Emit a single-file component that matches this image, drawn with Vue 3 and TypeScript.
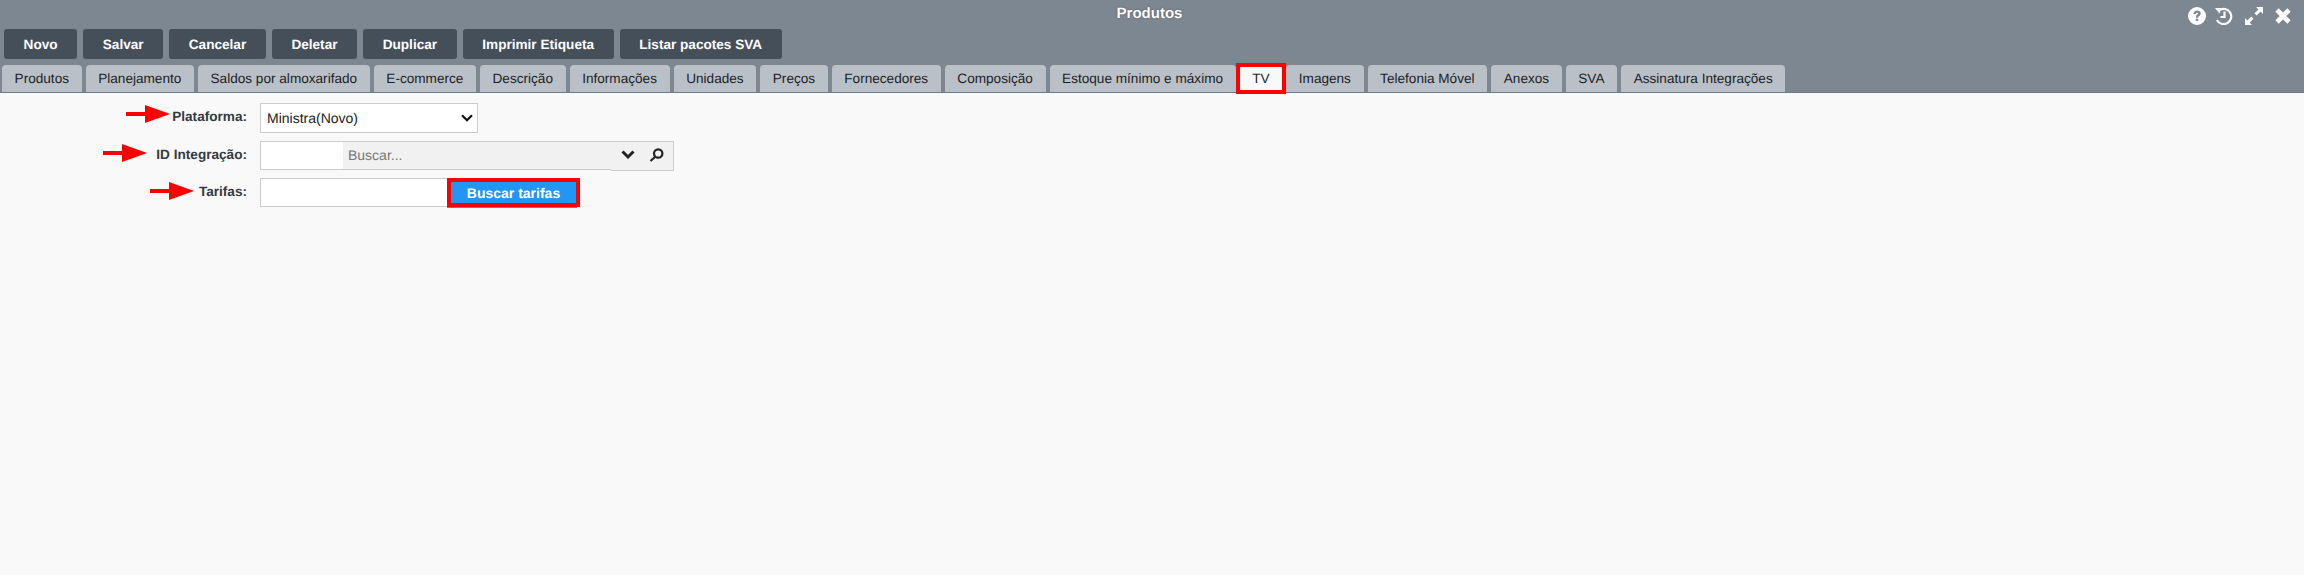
<script setup lang="ts">
const actions: string[] = ['Novo', 'Salvar', 'Cancelar', 'Deletar', 'Duplicar', 'Imprimir Etiqueta', 'Listar pacotes SVA']
const tabs: string[] = [
  'Produtos', 'Planejamento', 'Saldos por almoxarifado', 'E-commerce', 'Descrição', 'Informações', 'Unidades', 'Preços',
  'Fornecedores', 'Composição', 'Estoque mínimo e máximo', 'TV', 'Imagens', 'Telefonia Móvel', 'Anexos', 'SVA', 'Assinatura Integrações'
]
</script>

<template>
  <div class="page">
    <header class="head">
      <div class="title">
        <span>Produtos</span>
        <div class="win-icons">
          <svg width="18" height="18" viewBox="0 0 18 18">
            <path fill-rule="evenodd" fill="#fff" d="M9 0a9 9 0 1 1 0 18A9 9 0 0 1 9 0zM5.500 7H8c.1-.9.500-1.300 1.100-1.300.6 0 1 .4 1 .9 0 1.100-2.300 1.300-2.300 3.700v.5h2.400v-.4c0-1.500 2.500-1.700 2.500-4 0-1.800-1.500-3-3.500-3C6.900 3.400 5.600 4.800 5.500 7zm2.300 4.700V14h2.400v-2.300z" />
          </svg>
          <svg class="history" width="18" height="18" viewBox="0 0 18 18" fill="none" stroke="#fff" stroke-width="2.200">
            <path d="M0 1h6.200L4.500 6.500z" fill="#fff" stroke="none" />
            <path d="M4.200 3.300A7.600 7.600 0 1 1 1.900 13" />
            <path d="M9.500 4.500V10H5.500" />
          </svg>
          <svg width="18" height="18" viewBox="0 0 18 18" fill="#fff">
            <path d="M11 0h7v7l-2.400-2.400L11.700 8.500 9.500 6.300l3.900-3.900z" />
            <path d="M7 18H0v-7l2.400 2.400 3.900-3.900 2.200 2.200-3.900 3.900z" />
          </svg>
          <svg width="16" height="16" viewBox="0 0 16 16" stroke="#fff" stroke-width="4.600">
            <path d="M2 2l12 12M14 2L2 14" />
          </svg>
        </div>
      </div>
      <div class="actions">
        <button v-for="a in actions" :key="a" class="action">{{ a }}</button>
      </div>
      <nav class="tabs">
        <a v-for="t in tabs" :key="t" class="tab" :class="{ active: t === 'TV' }">{{ t }}</a>
      </nav>
    </header>

    <main class="form">
      <div class="row row-plat">
        <label>
          <svg class="arrow" width="44" height="18" viewBox="0 0 44 18"><path d="M0 7h19V0l25 9-25 9v-7H0z" fill="#f00" /></svg>
          Plataforma:
        </label>
        <div class="select">
          <span>Ministra(Novo)</span>
          <svg width="12" height="8" viewBox="0 0 12 8" fill="none" stroke="#111" stroke-width="2.200"><path d="M1 1.200l5 5 5-5" /></svg>
        </div>
      </div>
      <div class="row row-id">
        <label>
          <svg class="arrow" width="44" height="18" viewBox="0 0 44 18"><path d="M0 7h19V0l25 9-25 9v-7H0z" fill="#f00" /></svg>
          ID Integração:
        </label>
        <div class="lookup">
          <div class="field">
            <div class="code"></div>
            <div class="search">Buscar...</div>
          </div>
          <div class="btns">
            <svg width="14" height="10" viewBox="0 0 14 10" fill="none" stroke="#222" stroke-width="3"><path d="M1.500 1.500L7 7l5.500-5.500" /></svg>
            <svg width="15" height="14" viewBox="0 0 15 14" fill="none" stroke="#222" stroke-width="2.200"><circle cx="9.200" cy="5.500" r="4.200" /><path d="M6 9l-4.500 4" /></svg>
          </div>
        </div>
      </div>
      <div class="row row-tar">
        <label>
          <svg class="arrow" width="44" height="18" viewBox="0 0 44 18"><path d="M0 7h19V0l25 9-25 9v-7H0z" fill="#f00" /></svg>
          Tarifas:
        </label>
        <div class="tarifas">
          <div class="tar-input"></div>
          <button class="fetch">Buscar tarifas</button>
        </div>
      </div>
    </main>
  </div>
</template>

<style>
html, body { margin: 0; background: #f9f9f9; }
</style>

<style scoped>
.page {
  width: 2304px;
  height: 575px;
  overflow: hidden;
  background: #f9f9f9;
  font-family: "Liberation Sans", Arial, sans-serif;
  font-size: 13.6px;
  text-rendering: geometricPrecision;
}
.head {
  background: #7d8791;
  border-bottom: 1px solid #6f7984;
}
.title {
  position: relative;
  height: 29px;
  padding-right: 5px;
  line-height: 28px;
  text-align: center;
  color: #fff;
  font-weight: bold;
  font-size: 15px;
  text-shadow: 0 0 2px rgba(0, 0, 0, .4);
}
.win-icons {
  position: absolute;
  top: 7px;
  right: 13px;
  display: flex;
  align-items: center;
  gap: 12px;
}
.history {
  margin-left: -3px;
}
.actions {
  display: flex;
  gap: 6px;
  padding: 0 4px;
  height: 30px;
}
.action {
  height: 30px;
  padding: 0 19.6px;
  border: 0;
  border-radius: 3px;
  background: #454f5a;
  color: #fff;
  font: bold 13.6px "Liberation Sans", Arial, sans-serif;
  text-rendering: geometricPrecision;
}
.tabs {
  display: flex;
  gap: 4px;
  padding: 6px 0 0 2px;
  height: 27px;
}
.tab {
  position: relative;
  height: 27px;
  line-height: 27px;
  padding: 0 12.6px;
  border-radius: 4px 4px 0 0;
  background: #bac0c8;
  color: #1b1f24;
}
.tab.active {
  background: #f9f9f9;
}
/* marcação vermelha do print */
.tab.active::after {
  content: "";
  position: absolute;
  inset: -2px -4px -2px -4px;
  border: 4px solid #f00;
}
.form {
  padding-top: 10px;
}
.row {
  display: flex;
  margin-bottom: 8px;
}
label {
  position: relative;
  width: 247px;
  padding-right: 13px;
  text-align: right;
  font-weight: bold;
  color: #333a42;
  line-height: 27px;
}
.arrow {
  position: absolute;
}
.row-plat .arrow { left: 126px; top: 2px; }
.row-id .arrow { left: 103px; top: 3px; }
.row-tar .arrow { left: 150px; top: 4px; }
.select {
  box-sizing: border-box;
  width: 218px;
  height: 30px;
  padding: 0 4px 0 6px;
  display: flex;
  align-items: center;
  justify-content: space-between;
  background: #fff;
  border: 1px solid #ccc;
  font-size: 14px;
  color: #222;
}
.lookup {
  display: flex;
  align-items: flex-start;
  height: 29px;
}
.field {
  box-sizing: border-box;
  width: 351px;
  height: 29px;
  display: flex;
  background: #f1f1f1;
  border: 1px solid #ccc;
  border-right: 0;
}
.code {
  width: 82px;
  background: #fff;
}
.search {
  flex: 1;
  padding-left: 5px;
  line-height: 27px;
  font-size: 14px;
  color: #777;
}
.btns {
  box-sizing: border-box;
  width: 63px;
  height: 30px;
  display: flex;
  align-items: center;
  justify-content: flex-end;
  gap: 14px;
  padding: 0 9px 2px 0;
  background: #f1f1f1;
  border: 1px solid #ccc;
  border-left: 0;
}
.tarifas {
  display: flex;
  height: 30px;
}
.tar-input {
  box-sizing: border-box;
  width: 187px;
  height: 29px;
  background: #fff;
  border: 1px solid #ccc;
  border-right: 0;
}
.fetch {
  position: relative;
  box-sizing: border-box;
  width: 130px;
  height: 30px;
  padding: 0 0 1px 3px;
  border: 0;
  background: #2196f3;
  color: #fff;
  font: bold 14px "Liberation Sans", Arial, sans-serif;
  text-rendering: geometricPrecision;
}
/* marcação vermelha do print */
.fetch::after {
  content: "";
  position: absolute;
  inset: 0 -3px 1px 0;
  border: 4px solid #f00;
}
</style>
